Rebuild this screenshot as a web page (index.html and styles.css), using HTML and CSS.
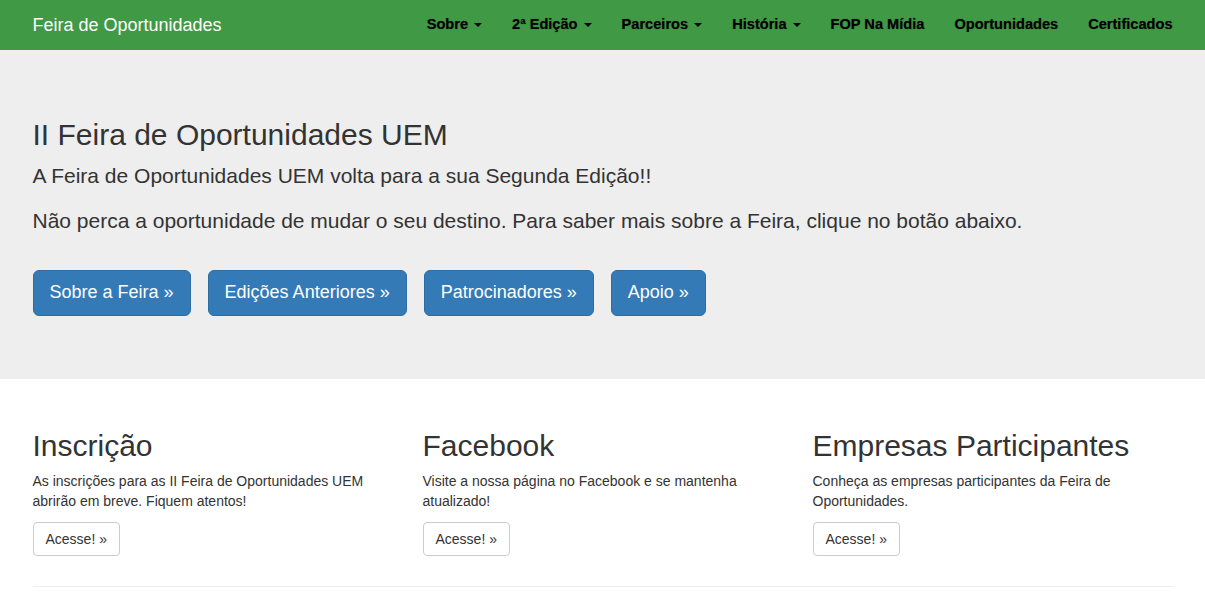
FILE: index.html
```html
<!DOCTYPE html>
<html lang="pt">
<head>
<meta charset="utf-8">
<title>Feira de Oportunidades</title>
<link rel="stylesheet" href="styles.css">
</head>
<body>
<nav class="navbar">
  <div class="container navbar-inner">
    <a class="brand" href="#">Feira de Oportunidades</a>
    <ul class="nav">
      <li><a href="#">Sobre <span class="caret"></span></a></li>
      <li><a href="#">2ª Edição <span class="caret"></span></a></li>
      <li><a href="#">Parceiros <span class="caret"></span></a></li>
      <li><a href="#">História <span class="caret"></span></a></li>
      <li><a href="#">FOP Na Mídia</a></li>
      <li><a href="#">Oportunidades</a></li>
      <li><a href="#">Certificados</a></li>
    </ul>
  </div>
</nav>
<div class="jumbotron">
  <div class="container">
    <h1>II Feira de Oportunidades UEM</h1>
    <p>A Feira de Oportunidades UEM volta para a sua Segunda Edição!!</p>
    <p>Não perca a oportunidade de mudar o seu destino. Para saber mais sobre a Feira, clique no botão abaixo.</p>
    <p class="actions">
      <a class="btn btn-primary" href="#">Sobre a Feira »</a>
      <a class="btn btn-primary" href="#">Edições Anteriores »</a>
      <a class="btn btn-primary" href="#">Patrocinadores »</a>
      <a class="btn btn-primary" href="#">Apoio »</a>
    </p>
  </div>
</div>
<div class="container">
  <div class="row">
    <div class="col">
      <h2>Inscrição</h2>
      <p>As inscrições para as II Feira de Oportunidades UEM abrirão em breve. Fiquem atentos!</p>
      <p><a class="btn btn-default" href="#">Acesse! »</a></p>
    </div>
    <div class="col">
      <h2>Facebook</h2>
      <p>Visite a nossa página no Facebook e se mantenha atualizado!</p>
      <p><a class="btn btn-default" href="#">Acesse! »</a></p>
    </div>
    <div class="col">
      <h2>Empresas Participantes</h2>
      <p>Conheça as empresas participantes da Feira de Oportunidades.</p>
      <p><a class="btn btn-default" href="#">Acesse! »</a></p>
    </div>
  </div>
  <hr>
</div>
</body>
</html>
```
FILE: styles.css
```css
* { box-sizing: border-box; }
html, body { margin: 0; }
body {
  font-family: "Liberation Sans", Arial, Helvetica, sans-serif;
  font-size: 14px;
  line-height: 1.42857;
  color: #333;
  background: #fff;
}
a { text-decoration: none; }
.container {
  width: 1170px;
  margin: 0 auto;
  padding: 0 15px;
}
.navbar {
  background: #409944;
  height: 50px;
}
.navbar-inner {
  display: flex;
  justify-content: space-between;
  align-items: stretch;
  height: 50px;
}
.brand {
  margin-left: -15px;
  padding: 15px;
  font-size: 18px;
  line-height: 20px;
  color: #fff;
}
.nav {
  list-style: none;
  margin: 0 -15px 0 0;
  padding: 0;
  display: flex;
}
.nav a {
  display: block;
  padding: 14px 15px 16px;
  line-height: 20px;
  font-size: 14.6px;
  font-weight: bold;
  color: #000;
  text-shadow: 0 0 1px rgba(0,0,0,0.4);
}
.caret {
  display: inline-block;
  width: 0;
  height: 0;
  margin-left: 2px;
  vertical-align: middle;
  border-top: 4px solid;
  border-right: 4px solid transparent;
  border-left: 4px solid transparent;
}
.jumbotron {
  background: #eee;
  padding: 48px 0;
  margin-bottom: 30px;
}
.jumbotron h1 {
  font-size: 30px;
  font-weight: 500;
  line-height: 1.1;
  margin: 20px 0 10px;
}
.jumbotron p {
  font-size: 21px;
  font-weight: 200;
  margin: 0 0 15px;
}
.jumbotron .actions {
  display: flex;
  gap: 17px;
  margin-top: 34px;
}
.btn {
  display: inline-block;
  border: 1px solid transparent;
  white-space: nowrap;
}
.btn-primary {
  background: #337ab7;
  border-color: #2e6da4;
  color: #fff;
  font-size: 18px;
  line-height: 1.3333;
  padding: 10px 16px;
  border-radius: 6px;
}
.btn-default {
  background: #fff;
  border-color: #ccc;
  color: #333;
  font-size: 14px;
  line-height: 20px;
  padding: 6px 12px;
  border-radius: 4px;
}
.row {
  display: grid;
  grid-template-columns: repeat(3, 1fr);
  margin: 0 -15px;
}
.col { padding: 0 15px; }
.col h2 {
  font-size: 30px;
  font-weight: 500;
  line-height: 1.1;
  margin: 20px 0 10px;
}
.col p { margin: 0 0 10px; }
hr {
  margin: 20px 0;
  border: 0;
  border-top: 1px solid #eee;
}
```
